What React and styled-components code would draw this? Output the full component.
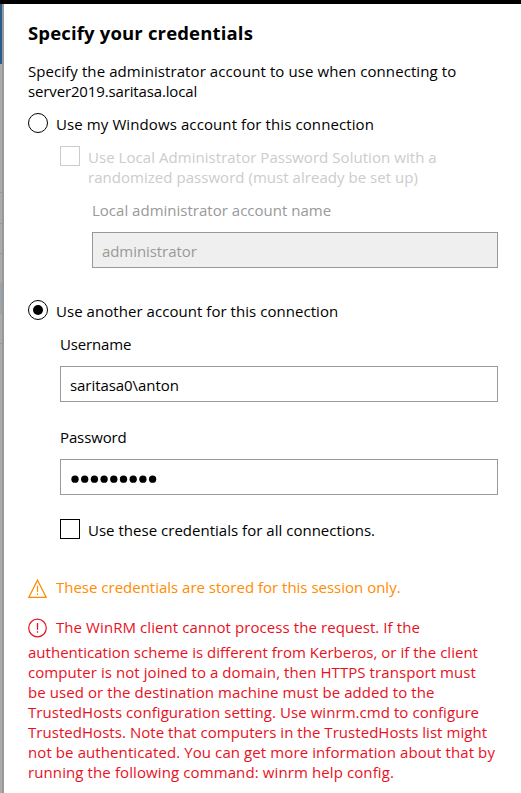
import React from 'react';
import styled, { createGlobalStyle } from 'styled-components';

const GlobalStyle = createGlobalStyle`
  *, *::before, *::after { box-sizing: border-box; }
  body { margin: 0; background: #fff; }
`;

const Screen = styled.div`
  display: flex;
  flex-direction: column;
  width: 521px;
  height: 793px;
  overflow: hidden;
  background: #fff;
  color: #000;
  font: 15px/20px "Open Sans", "Noto Sans", sans-serif;
`;

const TopEdge = styled.div`
  flex: none;
  height: 4px;
  background: #000;
`;

const Body = styled.div`
  display: flex;
  flex: 1;
  min-height: 0;
`;

const Backdrop = styled.div`
  flex: none;
  width: 2px;
  background:
    linear-gradient(#9a9a9a, #9a9a9a) 0 188px / 2px 1px no-repeat,
    linear-gradient(#9a9a9a, #9a9a9a) 0 219px / 2px 1px no-repeat,
    linear-gradient(#9a9a9a, #9a9a9a) 0 249px / 2px 1px no-repeat,
    linear-gradient(#9aa5aa, #9aa5aa) 0 279px / 2px 31px no-repeat,
    linear-gradient(#9a9a9a, #9a9a9a) 0 339px / 2px 1px no-repeat,
    linear-gradient(#275d8d, #275d8d) 0 0 / 2px 60px no-repeat,
    #acabaa;
`;

const PanelShadow = styled.div`
  flex: none;
  width: 2px;
  background: #999;
`;

const Panel = styled.form`
  display: flex;
  flex-direction: column;
  flex: 1;
  margin: 0;
  padding: 15px 23px 0 24px;
`;

const Title = styled.h1`
  margin: 0;
  height: 28px;
  font-size: 18.5px;
  line-height: 28px;
  font-weight: 700;
  letter-spacing: 0.16px;
  white-space: nowrap;
`;

const Line = styled.span`
  display: block;
  height: 20px;
  white-space: nowrap;
  letter-spacing: ${p => p.$track || 0}px;
`;

const Intro = styled.div`
  margin-top: 14px;
`;

const Choice = styled.label`
  display: flex;
  align-items: flex-start;
  gap: 8px;
  margin-top: ${p => p.$top}px;
  margin-left: ${p => p.$indent || 0}px;
  color: ${p => (p.$disabled ? '#ccc' : '#000')};
`;

const ChoiceText = styled.span`
  padding-top: 1px;
`;

const RadioMark = styled.span`
  display: flex;
  flex: none;
  width: 20px;
  height: 20px;
  border: 1px solid #000;
  border-radius: 50%;

  &::after {
    content: '';
    width: 10px;
    height: 10px;
    margin: auto;
    border-radius: 50%;
    background: ${p => (p.$checked ? '#000' : 'transparent')};
  }
`;

const CheckMark = styled.span`
  flex: none;
  width: 20px;
  height: 20px;
  border: 1px solid currentColor;
`;

const Field = styled.div`
  margin-top: ${p => p.$top}px;
  margin-left: ${p => p.$indent}px;
  color: ${p => (p.$disabled ? '#999' : '#000')};
`;

const FieldBox = styled.div`
  display: flex;
  align-items: center;
  height: 36px;
  margin-top: 12px;
  padding: 2px 9px 0;
  border: 1px solid #999;
  background: ${p => (p.$disabled ? '#efefef' : '#fff')};
`;

const Warning = styled.div`
  display: flex;
  gap: 9px;
  margin-top: 37px;
  color: #ff8c00;
`;

const ErrorMessage = styled.div`
  margin-top: 19px;
  color: #e81123;
`;

const ErrorHead = styled.div`
  display: flex;
  gap: 9px;
  margin-bottom: 4px;
`;

const Glyph = styled.svg`
  flex: none;
  width: 19px;
  height: 21px;
  fill: none;
  stroke: currentColor;
`;

export default function App() {
  return (
    <Screen>
      <GlobalStyle />
      <TopEdge />
      <Body>
        <Backdrop />
        <PanelShadow />
        <Panel>
          <Title>Specify your credentials</Title>
          <Intro>
            <Line $track={0.085}>Specify the administrator account to use when connecting to</Line>
            <Line $track={-0.14}>server2019.saritasa.local</Line>
          </Intro>

          <Choice $top={12}>
            <RadioMark />
            <ChoiceText><Line $track={0.1}>Use my Windows account for this connection</Line></ChoiceText>
          </Choice>
          <Choice $top={12} $indent={32} $disabled>
            <CheckMark />
            <ChoiceText>
              <Line $track={0.05}>Use Local Administrator Password Solution with a</Line>
              <Line $track={0.037}>randomized password (must already be set up)</Line>
            </ChoiceText>
          </Choice>
          <Field $top={13} $indent={64} $disabled>
            <Line $track={0.01}>Local administrator account name</Line>
            <FieldBox $disabled><Line $track={-0.07}>administrator</Line></FieldBox>
          </Field>

          <Choice $top={32}>
            <RadioMark $checked />
            <ChoiceText><Line $track={0.048}>Use another account for this connection</Line></ChoiceText>
          </Choice>
          <Field $top={13} $indent={32}>
            <Line $track={-0.15}>Username</Line>
            <FieldBox><Line $track={-0.06}>saritasa0\anton</Line></FieldBox>
          </Field>
          <Field $top={25} $indent={32}>
            <Line $track={-0.12}>Password</Line>
            <FieldBox>
              <svg width="90" height="12" viewBox="0 0 90 12" aria-label="Password entered">
                {Array.from({ length: 9 }, (_, i) => (
                  <circle key={i} cx={5 + i * 9.7} cy="7.2" r="3.65" />
                ))}
              </svg>
            </FieldBox>
          </Field>
          <Choice $top={24} $indent={32}>
            <CheckMark />
            <ChoiceText><Line $track={0.02}>Use these credentials for all connections.</Line></ChoiceText>
          </Choice>

          <Warning>
            <Glyph viewBox="0 0 19 21">
              <path d="M9.5 3.2 L18.2 20.3 H0.8 Z" strokeWidth="1.3" />
              <path d="M9.5 8.7 V15 M9.5 16.5 V18" strokeWidth="1.1" />
            </Glyph>
            <Line $track={-0.005}>These credentials are stored for this session only.</Line>
          </Warning>

          <ErrorMessage>
            <ErrorHead>
              <Glyph viewBox="0 0 19 21">
                <circle cx="9.5" cy="11" r="8.8" strokeWidth="1.2" />
                <path d="M9.5 6 V12.7 M9.5 14.2 V15.8" strokeWidth="1.3" />
              </Glyph>
              <Line $track={0.08}>The WinRM client cannot process the request. If the</Line>
            </ErrorHead>
            <Line $track={0.017}>authentication scheme is different from Kerberos, or if the client</Line>
            <Line $track={0.07}>computer is not joined to a domain, then HTTPS transport must</Line>
            <Line $track={0.078}>be used or the destination machine must be added to the</Line>
            <Line $track={0.06}>TrustedHosts configuration setting. Use winrm.cmd to configure</Line>
            <Line $track={0.045}>TrustedHosts. Note that computers in the TrustedHosts list might</Line>
            <Line $track={0.096}>not be authenticated. You can get more information about that by</Line>
            <Line $track={0.106}>running the following command: winrm help config.</Line>
          </ErrorMessage>
        </Panel>
      </Body>
    </Screen>
  );
}
